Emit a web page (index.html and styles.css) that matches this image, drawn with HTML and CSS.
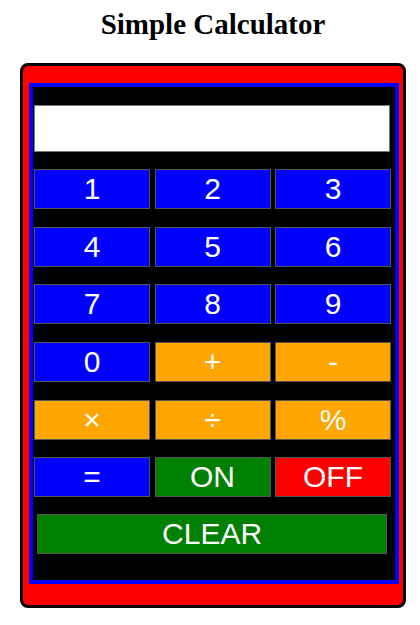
FILE: index.html
```html
<!DOCTYPE html>
<html lang="en">
<head>
<meta charset="utf-8">
<title>Simple Calculator</title>
<link rel="stylesheet" href="styles.css">
</head>
<body>
<h1 class="title">Simple Calculator</h1>
<div class="calc">
  <div class="panel">
    <input class="display" type="text" value="">
    <div class="keys">
      <button class="key blue">1</button>
      <button class="key blue">2</button>
      <button class="key blue">3</button>
      <button class="key blue">4</button>
      <button class="key blue">5</button>
      <button class="key blue">6</button>
      <button class="key blue">7</button>
      <button class="key blue">8</button>
      <button class="key blue">9</button>
      <button class="key blue">0</button>
      <button class="key orange">+</button>
      <button class="key orange">-</button>
      <button class="key orange">×</button>
      <button class="key orange">÷</button>
      <button class="key orange">%</button>
      <button class="key blue">=</button>
      <button class="key green">ON</button>
      <button class="key red">OFF</button>
    </div>
    <button class="key green clear">CLEAR</button>
  </div>
</div>
</body>
</html>
```
FILE: styles.css
```css
body {
  margin: 8px;
  background: #ffffff;
  font-family: "Liberation Serif", "Times New Roman", serif;
}

.title {
  margin: 0;
  padding-left: 6px;
  text-align: center;
  font-size: 29px;
  font-weight: 700;
  color: #000;
}

.calc {
  box-sizing: border-box;
  width: 386px;
  margin: 22px 0 0 12px;
  border: 3px solid #000;
  border-radius: 8px;
  background: #ff0000;
  padding: 17px 4px 21px 6px;
}

.panel {
  box-sizing: border-box;
  height: 501px;
  border: 4px solid #0000ff;
  background: #000;
  padding: 18px 4px 0 1px;
  display: flex;
  flex-direction: column;
  align-items: flex-start;
}

.display {
  box-sizing: border-box;
  display: block;
  width: 356px;
  height: 47px;
  margin: 0 0 17px 0;
  padding: 0;
  border: 1px solid #767676;
  background: #fff;
  outline: none;
}

.keys {
  display: grid;
  grid-template-columns: 116px 116px 116px;
  grid-auto-rows: 40px;
  column-gap: 4.5px;
  row-gap: 17.67px;
}

.key {
  box-sizing: border-box;
  margin: 0;
  padding: 0;
  height: 40px;
  border: 1px solid #555;
  color: #fff;
  font-family: "Liberation Sans", Arial, sans-serif;
  font-size: 30px;
  line-height: 1;
  text-align: center;
}

.blue { background: #0000ff; }
.orange { background: #ffa500; }
.green { background: #008000; }
.red { background: #ff0000; }

.clear {
  width: 349.7px;
  margin: 17px 0 0 3.3px;
}
```
